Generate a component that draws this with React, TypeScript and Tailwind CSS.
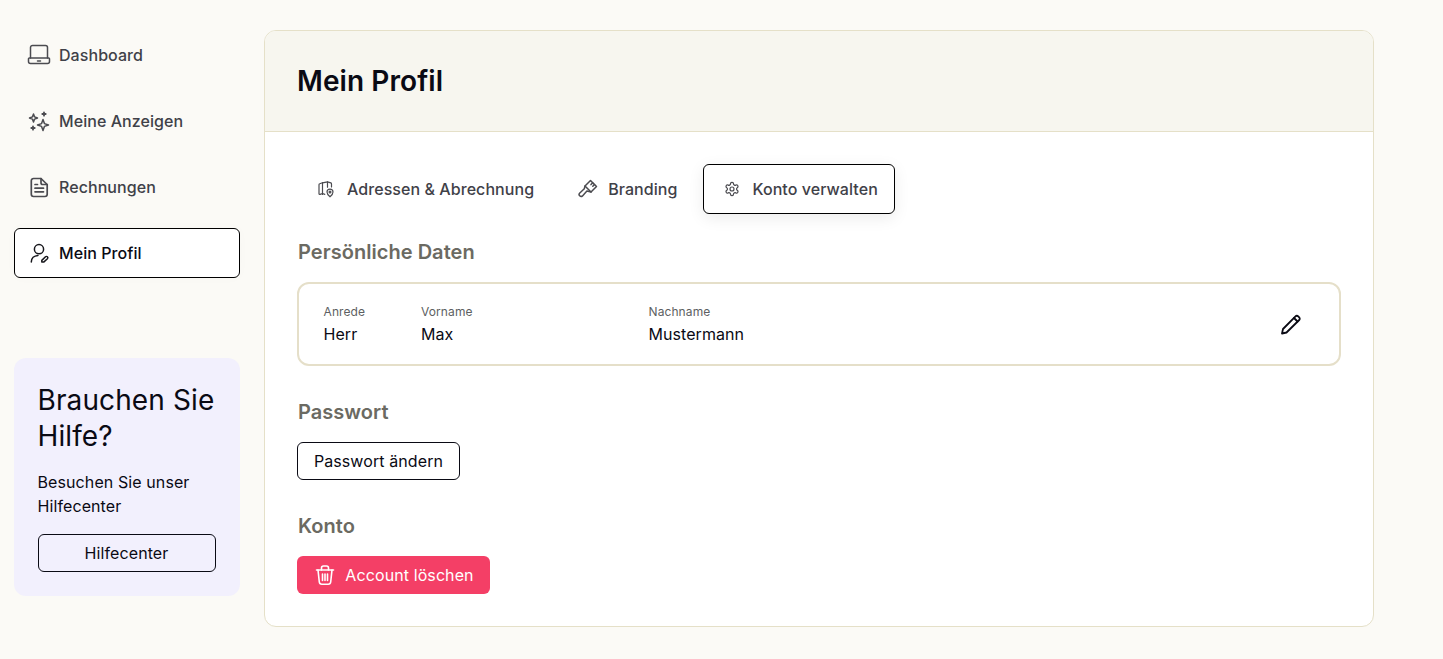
import React from "react";

const s = { fill: "none", stroke: "currentColor", strokeLinecap: "round" as const, strokeLinejoin: "round" as const };

function Laptop() {
  return (
    <svg width="24" height="24" viewBox="0 0 24 24" {...s} strokeWidth="1.5">
      <path d="M3.500 15V4.500a2 2 0 0 1 2-2h13a2 2 0 0 1 2 2V15" />
      <path d="M2.300 15h19.400a.8.800 0 0 1 .8.800v2.700a2 2 0 0 1-2 2h-17a2 2 0 0 1-2-2v-2.700a.8.800 0 0 1 .8-.8Z" />
      <path d="M10.500 18h3" />
    </svg>
  );
}
function Sparkles() {
  return (
    <svg width="24" height="24" viewBox="0 0 24 24" {...s} strokeWidth="1.5">
      <path d="M6.500 5 7.600 7.900 10.500 9 7.600 10.100 6.500 13 5.400 10.100 2.500 9 5.400 7.900Z" />
      <path d="M16 10.500 17.400 14.600 21.500 16 17.400 17.400 16 21.500 14.600 17.400 10.500 16 14.600 14.600Z" />
      <path d="M17 3.300v3.400M15.300 5h3.400" strokeWidth="1.800" />
      <path d="M6 17.300v3.400M4.300 19h3.400" strokeWidth="1.800" />
    </svg>
  );
}
function FileDoc() {
  return (
    <svg width="24" height="24" viewBox="0 0 24 24" {...s} strokeWidth="1.700">
      <path d="M14 3.500H6.500a2.200 2.200 0 0 0-2.200 2.200v13.600a2.200 2.200 0 0 0 2.200 2.200h11.500a2.200 2.200 0 0 0 2.200-2.200V9.500Z" />
      <path d="M14 3.500v4.200a1.800 1.800 0 0 0 1.800 1.800h4.400" />
      <path d="M8 9.500h2.500M8 13.200h8.500M8 16.800h8.500" />
    </svg>
  );
}
function UserEdit() {
  return (
    <svg width="24" height="24" viewBox="0 0 24 24" {...s} strokeWidth="1.500">
      <circle cx="12" cy="8.200" r="4.600" />
      <path d="M4.300 21c0-3.700 2.700-6.400 6.700-6.600" />
      <path d="M14.800 21v-1.600l3.700-3.600a1.300 1.300 0 0 1 1.900 1.900l-3.700 3.400Z" />
    </svg>
  );
}
function MapPin() {
  return (
    <svg width="18" height="18" viewBox="0 0 18 18" {...s} strokeWidth="1.200">
      <path d="M5.500 2.800 2.700 3.800a1 1 0 0 0-.7 1v8.900a.8.800 0 0 0 1.100.7l2.400-.9 2.300.9" />
      <path d="M5.500 2.800v11.600M10.500 1.800V7.200" />
      <path d="M5.500 2.800l5-.9 3.300 1a1 1 0 0 1 .7 1v3" />
      <path d="M13 16.800s-3-2.300-3-4.700a3 3 0 0 1 6 0c0 2.400-3 4.700-3 4.700Z" />
      <circle cx="13" cy="12" r="0.900" />
    </svg>
  );
}
function Brush() {
  return (
    <svg width="20" height="20" viewBox="0 0 20 20" {...s} strokeWidth="1.500">
      <path d="M7 7 12.500 1.500 18.500 7.500 13 13Z" />
      <path d="M14.700 3.700 13 5.600M16.500 5.500 14.800 7.300" />
      <path d="M7 7 6.300 9.800 1.800 14a1.800 1.800 0 0 0 2.700 2.900l4.400-4.800 4.100.9" />
    </svg>
  );
}
function Gear() {
  return (
    <svg width="16" height="16" viewBox="0 0 24 24" {...s} strokeWidth="1.800">
      <path d="M12.220 2h-.44a2 2 0 0 0-2 2v.180a2 2 0 0 1-1 1.730l-.430.250a2 2 0 0 1-2 0l-.150-.080a2 2 0 0 0-2.730.730l-.220.380a2 2 0 0 0 .730 2.730l.150.100a2 2 0 0 1 1 1.720v.510a2 2 0 0 1-1 1.740l-.150.090a2 2 0 0 0-.730 2.730l.220.380a2 2 0 0 0 2.730.730l.150-.080a2 2 0 0 1 2 0l.430.250a2 2 0 0 1 1 1.730V20a2 2 0 0 0 2 2h.440a2 2 0 0 0 2-2v-.180a2 2 0 0 1 1-1.730l.430-.250a2 2 0 0 1 2 0l.150.080a2 2 0 0 0 2.730-.730l.220-.390a2 2 0 0 0-.730-2.730l-.150-.080a2 2 0 0 1-1-1.740v-.500a2 2 0 0 1 1-1.740l.150-.090a2 2 0 0 0 .730-2.730l-.220-.380a2 2 0 0 0-2.730-.730l-.150.080a2 2 0 0 1-2 0l-.430-.250a2 2 0 0 1-1-1.730V4a2 2 0 0 0-2-2z" />
      <circle cx="12" cy="12" r="3" />
    </svg>
  );
}
function Pencil() {
  return (
    <svg width="24" height="24" viewBox="0 0 24 24" {...s} strokeWidth="1.800">
      <path d="M3 21.500l1-4.500L16.500 4.300a1.900 1.900 0 0 1 2.700 0l1 1a1.900 1.900 0 0 1 0 2.700L7.500 20.500Z" />
      <path d="M15 6l3.500 3.500" />
    </svg>
  );
}
function Trash() {
  return (
    <svg width="24" height="24" viewBox="0 0 24 24" {...s} strokeWidth="1.600">
      <path d="M3.500 7h17" />
      <path d="M8.500 7V5a2 2 0 0 1 2-2h3a2 2 0 0 1 2 2v2" />
      <path d="M5 7l1.300 12a2.500 2.500 0 0 0 2.500 2.200h6.400a2.500 2.500 0 0 0 2.500-2.200L19 7" />
      <path d="M9.500 11v6.500M12 11v6.500M14.500 11v6.500" />
    </svg>
  );
}

function NavItem({ icon, label, active }: { icon: React.ReactNode; label: string; active?: boolean }) {
  return (
    <a
      className={
        active
          ? "flex h-[50px] items-center gap-2 rounded-md border border-black bg-white pl-[12px] text-[16px] font-[450] tracking-[0.004em] text-[#0a0a14] shadow-[0_0_12px_rgba(0,0,0,0.02)]"
          : "flex h-[50px] items-center gap-2 rounded-md border border-transparent pl-[12px] text-[16px] font-[450] tracking-[0.004em] text-[#3f4148]"
      }
    >
      <span className={active ? "text-[#17171c]" : "text-[#4b4b50]"}>{icon}</span>
      {label}
    </a>
  );
}

function Field({ label, value, className }: { label: string; value: string; className: string }) {
  return (
    <div className={className}>
      <div className="pt-[2px] text-[12px] leading-[16px] text-[#5d5f62]">{label}</div>
      <div className="mt-[2px] text-[16px] leading-[24px] tracking-[0.004em] text-[#0a0a14]">{value}</div>
    </div>
  );
}

export default function App() {
  return (
    <div
      className="flex min-h-[659px] gap-6 bg-[#fbfaf6] pl-[14px] pt-[30px] tracking-[0.006em]"
      style={{ fontFamily: "Inter, 'Liberation Sans', sans-serif" }}
    >
      <aside className="flex h-[566px] w-[226px] shrink-0 flex-col justify-between">
        <nav className="flex flex-col gap-4">
          <NavItem icon={<Laptop />} label="Dashboard" />
          <NavItem icon={<Sparkles />} label="Meine Anzeigen" />
          <NavItem icon={<FileDoc />} label="Rechnungen" />
          <NavItem icon={<UserEdit />} label="Mein Profil" active />
        </nav>
        <div className="h-[238px] rounded-xl bg-[#f2f0fd] pl-[23.5px] pr-6 pt-6 text-[#0a0a14]">
          <h3 className="text-[28px] leading-[36px] tracking-[0.004em]">Brauchen Sie Hilfe?</h3>
          <p className="mt-[16px] text-[16px] leading-[24px]">Besuchen Sie unser Hilfecenter</p>
          <button className="mt-[16px] h-[38px] w-[178px] rounded-md border border-[#0a0a14] text-[16px]">
            Hilfecenter
          </button>
        </div>
      </aside>

      <main className="h-[597px] w-[1110px] overflow-hidden rounded-xl border border-[#e5e0c8] bg-white">
        <header className="flex h-[101px] items-center border-b border-[#e5e0c8] bg-[#f7f6ef] pl-[32px]">
          <h1 className="text-[28px] font-semibold leading-[36px] tracking-[0.003em] text-[#0a0a14]">Mein Profil</h1>
        </header>
        <div className="px-[32px] pt-[32px]">
          <div className="flex items-center gap-[10px] text-[16px] font-[450] tracking-[0.004em] text-[#3f4148]">
            <button className="flex h-[50px] items-center gap-3 pl-5 pr-[17px]">
              <span className="text-[#4b4b50]"><MapPin /></span>
              Adressen &amp; Abrechnung
            </button>
            <button className="flex h-[50px] items-center gap-[10px] pl-[17px] pr-[16px]">
              <span className="text-[#4b4b50]"><Brush /></span>
              Branding
            </button>
            <button className="flex h-[50px] items-center gap-3 rounded-md border border-black bg-white pl-5 pr-[16px] shadow-[0_4px_16px_rgba(0,0,0,0.08)]">
              <span className="text-[#4b4b50]"><Gear /></span>
              Konto verwalten
            </button>
          </div>

          <h2 className="mt-[23px] pl-px text-[20px] font-semibold leading-[30px] tracking-[0.002em] text-[#6b6a62]">Persönliche Daten</h2>
          <div className="mt-[15px] flex h-[84px] items-center rounded-xl border-2 border-[#e5dfc9] pl-[24.5px] pr-[36px]">
            <Field label="Anrede" value="Herr" className="w-[97.5px]" />
            <Field label="Vorname" value="Max" className="w-[227.5px]" />
            <Field label="Nachname" value="Mustermann" className="flex-1" />
            <span className="text-[#0a0a14]"><Pencil /></span>
          </div>

          <h2 className="mt-[31px] pl-px text-[20px] font-semibold leading-[30px] tracking-[0.002em] text-[#6b6a62]">Passwort</h2>
          <button className="mt-[15px] block h-[38px] w-[163px] rounded-md border border-[#0a0a14] text-[16px] text-[#0a0a14]">
            Passwort ändern
          </button>

          <h2 className="mt-[31px] pl-px text-[20px] font-semibold leading-[30px] tracking-[0.002em] text-[#6b6a62]">Konto</h2>
          <button className="mt-[15px] flex h-[38px] w-[193px] items-center justify-center gap-[8px] rounded-md bg-[#f43f66] text-[16px] text-white">
            <Trash />
            Account löschen
          </button>
        </div>
      </main>
    </div>
  );
}
